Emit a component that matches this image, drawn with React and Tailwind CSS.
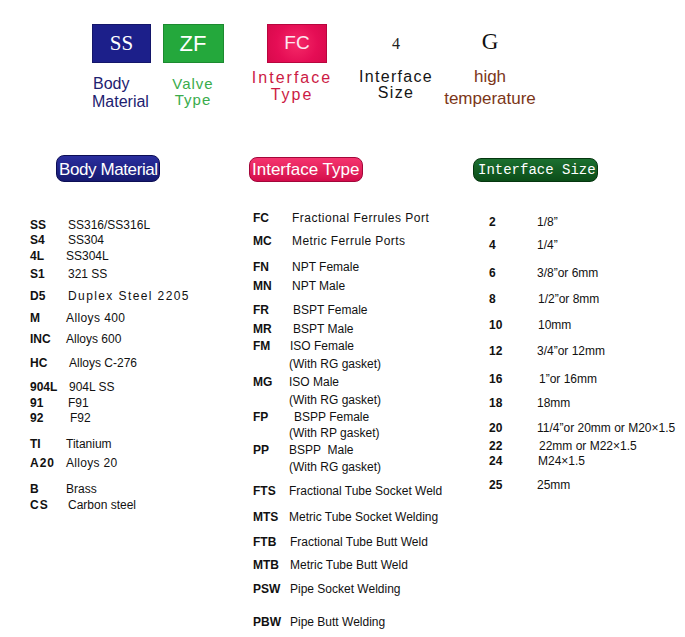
import React from 'react';

const ink = 'text-[#111111]';

const bodyRows = [
  { c: 'SS', v: 'SS316/SS316L', h: 'h-[15px]', o: 'pl-[2px]' },
  { c: 'S4', v: 'SS304', h: 'h-[16px]', o: 'pl-[2px]' },
  { c: '4L', v: 'SS304L', h: 'h-[18px]', o: '' },
  { c: 'S1', v: '321 SS', h: 'h-[22px]', o: 'pl-[2px]' },
  { c: 'D5', v: 'Duplex Steel 2205', h: 'h-[22px]', o: 'pl-[2px] tracking-[1.4px]' },
  { c: 'M', v: 'Alloys 400', h: 'h-[21px]', o: 'tracking-[0.4px]' },
  { c: 'INC', v: 'Alloys 600', h: 'h-[24px]', o: '' },
  { c: 'HC', v: 'Alloys C-276', h: 'h-[24px]', o: 'pl-[3px]' },
  { c: '904L', v: '904L SS', h: 'h-[16px]', o: 'pl-[3px]' },
  { c: '91', v: 'F91', h: 'h-[15px]', o: 'pl-[2px]' },
  { c: '92', v: 'F92', h: 'h-[26px]', o: 'pl-[4px]' },
  { c: 'TI', v: 'Titanium', h: 'h-[19px]', o: '' },
  { c: 'A20', v: 'Alloys 20', h: 'h-[26px]', o: 'tracking-[0.3px]', cc: 'tracking-[1px]' },
  { c: 'B', v: 'Brass', h: 'h-[16px]', o: '' },
  { c: 'CS', v: 'Carbon steel', h: 'h-[16px]', o: 'pl-[2px]', cc: 'tracking-[1px]' },
];

const typeRows = [
  { c: 'FC', v: 'Fractional Ferrules Port', h: 'h-[23px]', o: 'pl-[3px] tracking-[0.5px]' },
  { c: 'MC', v: 'Metric Ferrule Ports', h: 'h-[26px]', o: 'pl-[3px] tracking-[0.4px]' },
  { c: 'FN', v: 'NPT Female', h: 'h-[19px]', o: 'pl-[3px]' },
  { c: 'MN', v: 'NPT Male', h: 'h-[24px]', o: 'pl-[3px]' },
  { c: 'FR', v: 'BSPT Female', h: 'h-[19px]', o: 'pl-[4px]' },
  { c: 'MR', v: 'BSPT Male', h: 'h-[17px]', o: 'pl-[4px]' },
  { c: 'FM', v: 'ISO Female', h: 'h-[18px]', o: 'pl-[1px]' },
  { c: '', v: '(With RG gasket)', h: 'h-[18px]', o: '' },
  { c: 'MG', v: 'ISO Male', h: 'h-[18px]', o: '' },
  { c: '', v: '(With RG gasket)', h: 'h-[17px]', o: '' },
  { c: 'FP', v: 'BSPP Female', h: 'h-[16px]', o: 'pl-[5px]' },
  { c: '', v: '(With RP gasket)', h: 'h-[17px]', o: '' },
  { c: 'PP', v: 'BSPP  Male', h: 'h-[17px]', o: 'whitespace-pre' },
  { c: '', v: '(With RG gasket)', h: 'h-[24px]', o: '' },
  { c: 'FTS', v: 'Fractional Tube Socket Weld', h: 'h-[26px]', o: '' },
  { c: 'MTS', v: 'Metric Tube Socket Welding', h: 'h-[25px]', o: '' },
  { c: 'FTB', v: 'Fractional Tube Butt Weld', h: 'h-[23px]', o: 'pl-[1px]' },
  { c: 'MTB', v: 'Metric Tube Butt Weld', h: 'h-[24px]', o: 'pl-[1px]' },
  { c: 'PSW', v: 'Pipe Socket Welding', h: 'h-[33px]', o: 'pl-[1px]' },
  { c: 'PBW', v: 'Pipe Butt Welding', h: 'h-[14px]', o: 'pl-[1px]' },
];

const sizeRows = [
  { c: '2', v: '1/8\u201d', h: 'h-[23px]', o: '' },
  { c: '4', v: '1/4\u201d', h: 'h-[28px]', o: '' },
  { c: '6', v: '3/8\u201dor 6mm', h: 'h-[26px]', o: '' },
  { c: '8', v: '1/2\u201dor 8mm', h: 'h-[26px]', o: 'pl-[1px]' },
  { c: '10', v: '10mm', h: 'h-[26px]', o: 'pl-[1px]' },
  { c: '12', v: '3/4\u201dor 12mm', h: 'h-[28px]', o: '' },
  { c: '16', v: '1\u201dor 16mm', h: 'h-[24px]', o: 'pl-[2px]' },
  { c: '18', v: '18mm', h: 'h-[25px]', o: '' },
  { c: '20', v: '11/4\u201dor 20mm or M20\u00d71.5', h: 'h-[18px]', o: '' },
  { c: '22', v: '22mm or M22\u00d71.5', h: 'h-[15px]', o: 'pl-[2px]' },
  { c: '24', v: 'M24\u00d71.5', h: 'h-[24px]', o: 'pl-[1px]' },
  { c: '25', v: '25mm', h: 'h-[14px]', o: '' },
];

const CodeList = ({ rows, codeW }) => (
  <div className="flex flex-col">
    {rows.map((r, i) => (
      <div key={i} className={`flex items-start ${r.h}`}>
        <span className={`${codeW} shrink-0 font-bold text-[12px] leading-[14px] ${ink} ${r.cc || ''}`}>{r.c}</span>
        <span className={`text-[12px] leading-[14px] whitespace-nowrap ${ink} ${r.o}`}>{r.v}</span>
      </div>
    ))}
  </div>
);

export default function App() {
  return (
    <div className="w-[685px] h-[637px] bg-white overflow-hidden" style={{ fontFamily: '"Liberation Sans", Arial, sans-serif' }}>
      {/* legend of the code parts */}
      <div className="h-[155px] flex items-start pt-[24px] pl-[92px]">
        <div className="w-[70px] flex flex-col">
          <div className="w-[59px] h-[39px] bg-[#1c1f8a] border border-[#14166a] flex items-center justify-center text-white text-[21px]" style={{ fontFamily: '"Liberation Serif", serif' }}>
            SS
          </div>
          <div className="mt-[12px] text-[16px] leading-[18px] text-[#1d2170]">
            <div className="pl-[1px]">Body</div>
            <div>Material</div>
          </div>
        </div>

        <div className="w-[62px] flex flex-col items-center">
          <div className="w-[61px] h-[39px] bg-[#24a83c] border border-[#1c8a30] flex items-center justify-center text-white text-[22px]">
            ZF
          </div>
          <div className="mt-[13px] text-[15px] leading-[16px] tracking-[1px] text-[#3aac4c] text-center">
            <div>Valve</div>
            <div>Type</div>
          </div>
        </div>

        <div className="ml-[16px] w-[104px] flex flex-col">
          <div className="ml-[27px] w-[60px] h-[39px] bg-[radial-gradient(circle,#f52a68_0%,#e50d55_60%,#d80a4c_100%)] border border-[#b8063e] flex items-center justify-center text-[#fde8f0] text-[19px]">
            FC
          </div>
          <div className="mt-[6px] text-[16px] leading-[17px] tracking-[2px] text-[#cc1a44] text-center">
            <div>Interface</div>
            <div>Type</div>
          </div>
        </div>

        <div className="ml-[6px] w-[92px] flex flex-col items-center">
          <div className="h-[39px] flex items-center text-[16px] text-[#222]" style={{ fontFamily: '"Liberation Serif", serif' }}>4</div>
          <div className="mt-[6px] text-[16px] leading-[16px] tracking-[1.3px] text-[#151515] text-center">
            <div>Interface</div>
            <div>Size</div>
          </div>
        </div>

        <div className="w-[96px] flex flex-col items-center">
          <div className="h-[36px] flex items-center text-[23px] text-[#111]" style={{ fontFamily: '"Liberation Serif", serif' }}>G</div>
          <div className="mt-[6px] text-[17px] leading-[22px] text-[#7c3618] text-center">
            <div>high</div>
            <div>temperature</div>
          </div>
        </div>
      </div>

      {/* three code tables */}
      <div className="flex items-start">
        <div className="ml-[30px] w-[219px] flex flex-col">
          <div className="ml-[26px] w-[104px] h-[27px] rounded-[8px] overflow-hidden border border-[#0c0e55] bg-gradient-to-b from-[#2a2e9e] to-[#161a70] text-white text-[17px] leading-[27px] tracking-[-0.4px] pl-[2px] whitespace-nowrap">
            Body Material
          </div>
          <div className="mt-[36px]">
            <CodeList rows={bodyRows} codeW="w-[36px]" />
          </div>
        </div>

        <div className="w-[224px] flex flex-col">
          <div className="mt-[2px] w-[114px] h-[25px] rounded-[8px] border border-[#a3063a] bg-gradient-to-b from-[#f5336e] to-[#d40b4b] text-white text-[17px] leading-[24px] pl-[2px] whitespace-nowrap">
            Interface Type
          </div>
          <div className="mt-[29px] pl-[4px]">
            <CodeList rows={typeRows} codeW="w-[36px]" />
          </div>
        </div>

        <div className="w-[208px] flex flex-col">
          <div className="mt-[3px] w-[125px] h-[24px] rounded-[8px] border border-[#05360f] bg-gradient-to-b from-[#1c7030] to-[#0b4d18] text-white text-[14px] leading-[23px] pl-[4px] whitespace-nowrap" style={{ fontFamily: '"Liberation Mono", "DejaVu Sans Mono", monospace' }}>
            Interface Size
          </div>
          <div className="mt-[33px] pl-[16px]">
            <CodeList rows={sizeRows} codeW="w-[48px]" />
          </div>
        </div>
      </div>
    </div>
  );
}
